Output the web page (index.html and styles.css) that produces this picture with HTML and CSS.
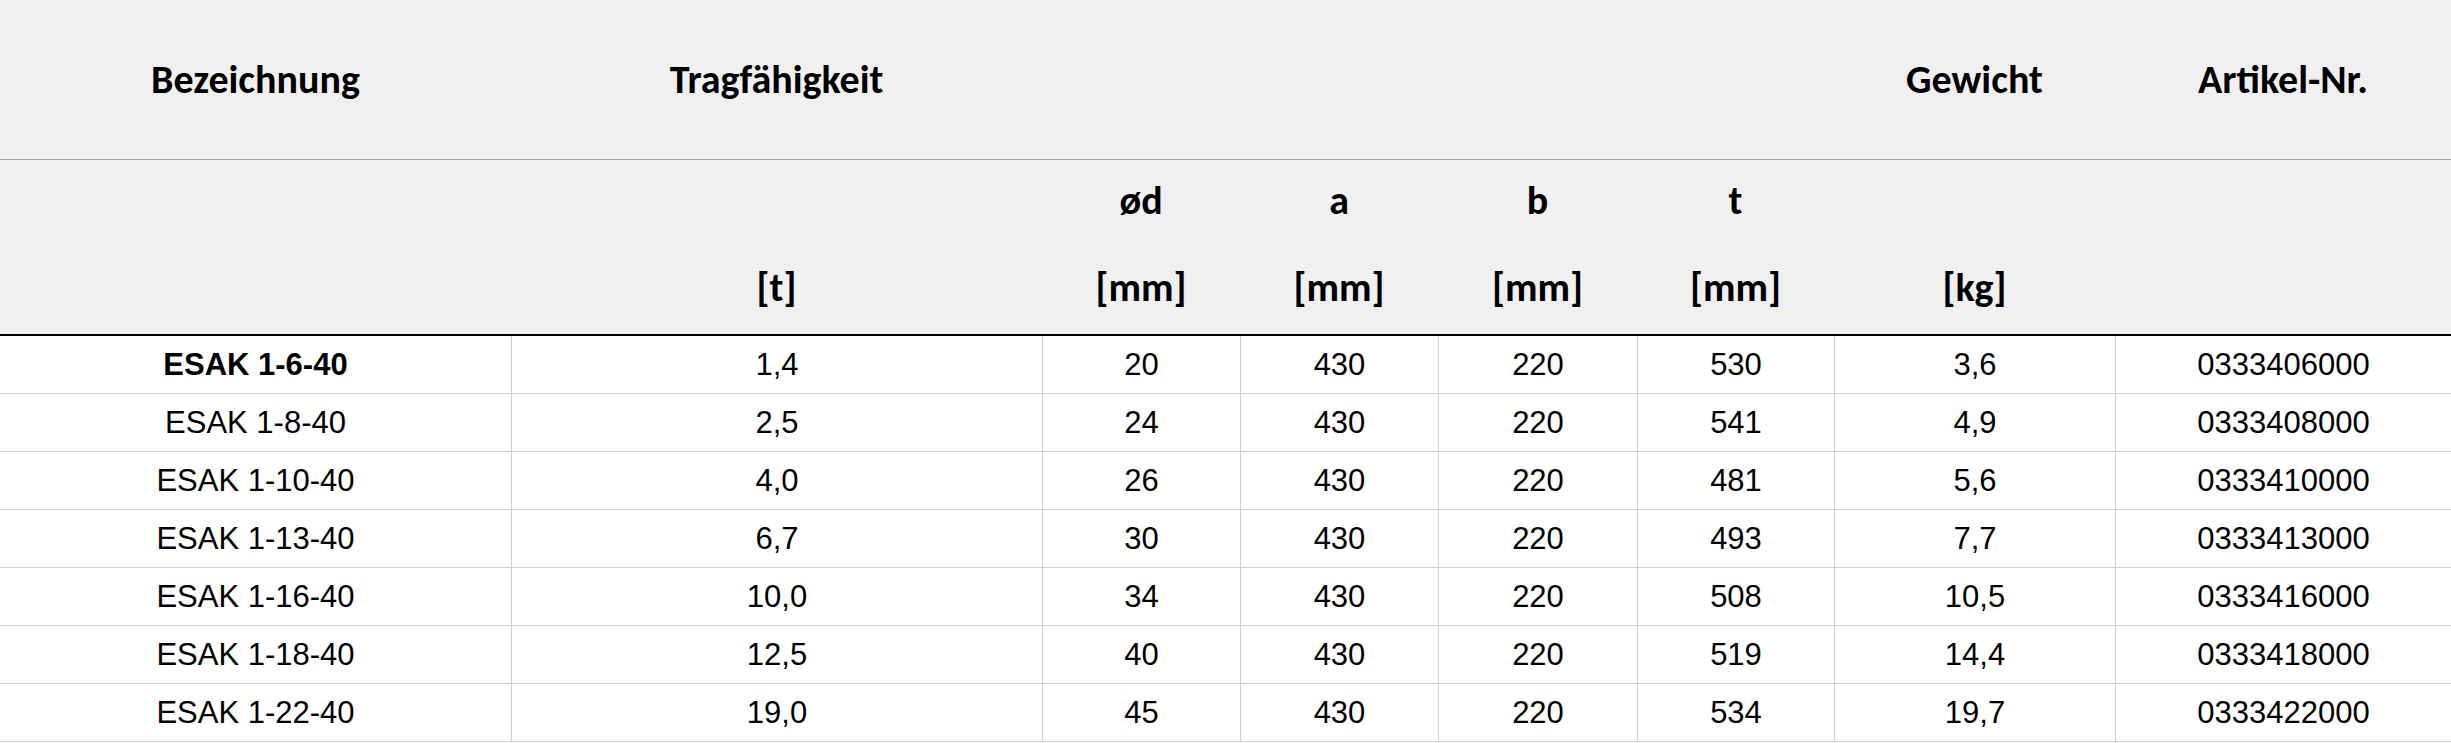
FILE: index.html
```html
<!DOCTYPE html>
<html lang="de">
<head>
<meta charset="utf-8">
<title>ESAK Tabelle</title>
<link rel="stylesheet" href="styles.css">
</head>
<body>
<table class="spec">
  <colgroup>
    <col class="c-name">
    <col class="c-load">
    <col class="c-d">
    <col class="c-a">
    <col class="c-b">
    <col class="c-t">
    <col class="c-kg">
    <col class="c-art">
  </colgroup>
  <thead>
    <tr class="head-main">
      <th>Bezeichnung</th>
      <th>Tragfähigkeit</th>
      <th></th>
      <th></th>
      <th></th>
      <th></th>
      <th>Gewicht</th>
      <th>Artikel-Nr.</th>
    </tr>
    <tr class="head-sub">
      <th><div class="sym"></div><div class="unit"></div></th>
      <th><div class="sym"></div><div class="unit">[t]</div></th>
      <th><div class="sym">ød</div><div class="unit">[mm]</div></th>
      <th><div class="sym">a</div><div class="unit">[mm]</div></th>
      <th><div class="sym">b</div><div class="unit">[mm]</div></th>
      <th><div class="sym">t</div><div class="unit">[mm]</div></th>
      <th><div class="sym"></div><div class="unit">[kg]</div></th>
      <th><div class="sym"></div><div class="unit"></div></th>
    </tr>
  </thead>
  <tbody>
    <tr><td class="strong">ESAK 1-6-40</td><td>1,4</td><td>20</td><td>430</td><td>220</td><td>530</td><td>3,6</td><td>0333406000</td></tr>
    <tr><td>ESAK 1-8-40</td><td>2,5</td><td>24</td><td>430</td><td>220</td><td>541</td><td>4,9</td><td>0333408000</td></tr>
    <tr><td>ESAK 1-10-40</td><td>4,0</td><td>26</td><td>430</td><td>220</td><td>481</td><td>5,6</td><td>0333410000</td></tr>
    <tr><td>ESAK 1-13-40</td><td>6,7</td><td>30</td><td>430</td><td>220</td><td>493</td><td>7,7</td><td>0333413000</td></tr>
    <tr><td>ESAK 1-16-40</td><td>10,0</td><td>34</td><td>430</td><td>220</td><td>508</td><td>10,5</td><td>0333416000</td></tr>
    <tr><td>ESAK 1-18-40</td><td>12,5</td><td>40</td><td>430</td><td>220</td><td>519</td><td>14,4</td><td>0333418000</td></tr>
    <tr><td>ESAK 1-22-40</td><td>19,0</td><td>45</td><td>430</td><td>220</td><td>534</td><td>19,7</td><td>0333422000</td></tr>
  </tbody>
</table>
</body>
</html>
```

FILE: styles.css
```css
html, body {
  margin: 0;
  padding: 0;
  background: #ffffff;
}

.spec {
  width: 2451px;
  table-layout: fixed;
  border-collapse: separate;
  border-spacing: 0;
  color: #000000;
}

.c-name { width: 511px; }
.c-load { width: 531px; }
.c-d { width: 198px; }
.c-a { width: 198px; }
.c-b { width: 199px; }
.c-t { width: 197px; }
.c-kg { width: 281px; }
.c-art { width: 336px; }

.spec th {
  background: #f0f0f0;
  font-family: Carlito, Calibri, Lato, sans-serif;
  font-weight: 700;
  font-size: 40px;
  text-align: center;
  padding: 0;
  box-sizing: border-box;
}

.head-main th {
  line-height: 159px;
  border-bottom: 1px solid #a0a0a0;
}

.head-sub th {
  border-bottom: 2px solid #000000;
}

.sym {
  height: 81px;
  line-height: 81px;
}

.unit {
  height: 93px;
  line-height: 93px;
}

.spec td {
  font-family: "Liberation Sans", Arial, sans-serif;
  font-size: 31px;
  line-height: 57px;
  text-align: center;
  padding: 0;
  box-sizing: border-box;
  border-bottom: 1px solid #d0d0d0;
  white-space: nowrap;
}

.spec td + td {
  border-left: 1px solid #d0d0d0;
}

.spec td.strong {
  font-weight: 700;
}
```
